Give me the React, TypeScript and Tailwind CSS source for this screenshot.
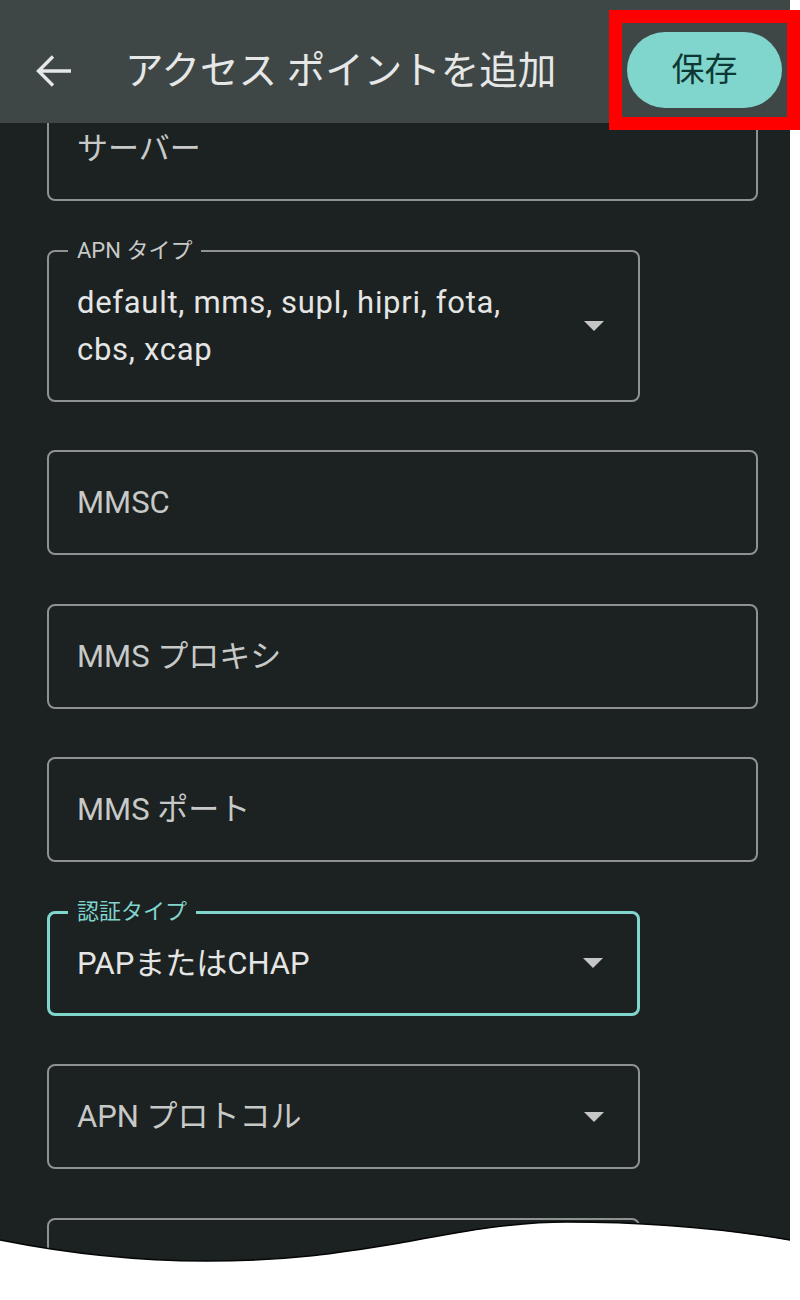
import React from 'react';

interface FieldProps {
  label?: string;
  children?: React.ReactNode;
  placeholder?: boolean;
  dropdown?: boolean;
  focused?: boolean;
  wide?: boolean;
}

const DropArrow: React.FC = () => (
  <svg width="20" height="10" viewBox="0 0 20 10" className="shrink-0">
    <path d="M0 0 H20 L10 10 Z" fill="#c4c7c5" />
  </svg>
);

const Field: React.FC<FieldProps> = ({ label, children, placeholder, dropdown, focused, wide }) => (
  <div className={`relative ${dropdown ? 'w-[593px]' : 'w-[711px]'}`}>
    <div
      className={`flex items-center rounded-[8px] pr-[34px] ${
        focused
          ? 'border-[3px] border-[#80d5cc] pl-[27px] py-[26px]'
          : 'border-2 border-[#8e9392] pl-[28px] py-[27px]'
      }`}
    >
      <div
        className={`flex-1 min-h-[47px] text-[31px] leading-[47px] ${
          placeholder ? 'text-[#c6c9c7]' : 'text-[#e4e5e4]'
        } ${wide ? 'tracking-[0.7px]' : ''}`}
      >
        {children}
      </div>
      {dropdown && <DropArrow />}
    </div>
    {label && (
      <span
        className={`absolute left-[21px] top-[1px] -translate-y-1/2 bg-[#1c2121] px-[9px] text-[22px] leading-none ${
          focused ? 'text-[#80d5cc]' : 'text-[#c6c9c7]'
        }`}
      >
        {label}
      </span>
    )}
  </div>
);

const App: React.FC = () => {
  return (
    <div
      className="relative w-[800px] h-[1300px] overflow-hidden bg-white"
      style={{ fontFamily: "Roboto, 'Noto Sans CJK JP', sans-serif" }}
    >
      <div className="w-[790px] h-[1300px] bg-[#1c2121] flex flex-col">
        {/* Top bar */}
        <header className="h-[123px] shrink-0 bg-[#3f4746] flex items-center pt-[20px] pr-[8px] relative z-10">
          <div className="w-[125px] shrink-0 flex items-center pl-[36px] -mt-[2px]">
            <svg width="40" height="36" viewBox="0 0 40 36">
              <path
                d="M3 18 H35 M17 3.5 L2.5 18 L17 32.5"
                stroke="#e6e8e7"
                strokeWidth="3.4"
                fill="none"
              />
            </svg>
          </div>
          <h1 className="flex-1 text-[38.5px] leading-none text-[#e6e8e7] whitespace-nowrap">
            アクセス ポイントを追加
          </h1>
          <button className="w-[155px] h-[76px] -mt-[4px] rounded-full bg-[#80d5cc] text-[#0e3833] text-[33px] leading-none flex items-center justify-center">
            保存
          </button>
        </header>

        {/* Form */}
        <div className="flex-1 overflow-hidden">
          <div className="-mt-[27px] pl-[47px] flex flex-col gap-[48.5px]">
            <Field placeholder>サーバー</Field>
            <Field label="APN タイプ" dropdown wide>
              default, mms, supl, hipri, fota,
              <br />
              cbs, xcap
            </Field>
            <Field placeholder>MMSC</Field>
            <Field placeholder>MMS プロキシ</Field>
            <Field placeholder>MMS ポート</Field>
            <Field label="認証タイプ" dropdown focused>
              PAPまたはCHAP
            </Field>
            <Field placeholder dropdown>
              APN プロトコル
            </Field>
            <Field placeholder dropdown />
          </div>
        </div>
      </div>

      {/* Highlight frame around save button */}
      <div className="absolute left-[609px] top-[10px] w-[191px] h-[120px] border-[13px] border-[#ff0000] z-20" />

      {/* Torn bottom edge */}
      <svg
        className="absolute left-0 bottom-0 z-20"
        width="800"
        height="82"
        viewBox="0 0 800 82"
      >
        <path
          d="M0 22 C70 36 140 43 206 43 C290 43 340 35 400 25 C460 14 510 4 567 4 C650 4 720 10 800 24 V82 H0 Z"
          fill="#ffffff"
        />
        <path
          d="M0 22 C70 36 140 43 206 43 C290 43 340 35 400 25 C460 14 510 4 567 4 C650 4 720 10 790 22"
          stroke="#050707"
          strokeWidth="1.5"
          fill="none"
        />
      </svg>
    </div>
  );
};

export default App;
